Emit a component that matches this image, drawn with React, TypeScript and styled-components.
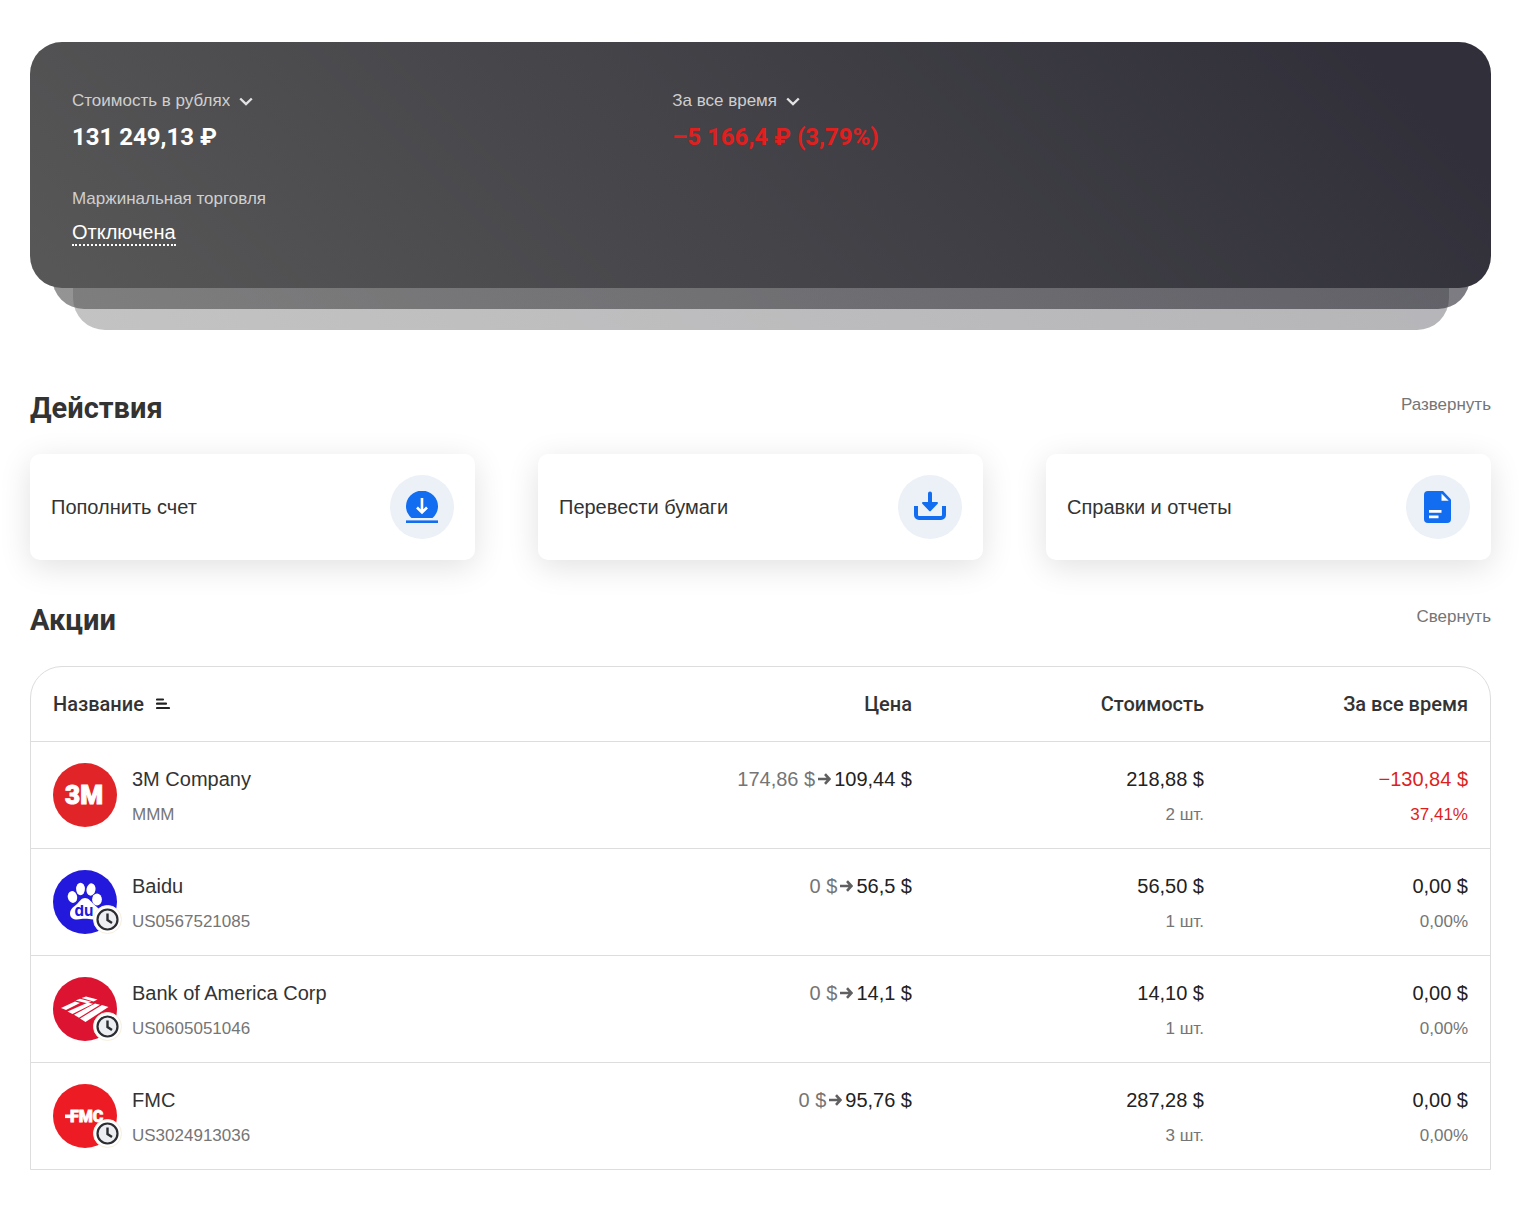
import React from "react";
import styled, { createGlobalStyle } from "styled-components";

const GlobalStyle = createGlobalStyle`
  *, *::before, *::after { box-sizing: border-box; }
  body {
    margin: 0;
    background: #fff;
    color: #333;
    font-family: "Liberation Sans", Arial, sans-serif;
    font-size: 20px;
    line-height: 32px;
  }
  button, select {
    margin: 0;
    padding: 0;
    border: 0;
    background: none;
    color: inherit;
    font: inherit;
    cursor: pointer;
  }
`;

const Page = styled.main`
  padding: 42px 29px 43px 30px;
`;

const Deck = styled.section`
  position: relative;
  z-index: 0;
  margin-bottom: 104px;
`;

const deckGradient = "linear-gradient(45deg, #585858 0%, #31303a 92%)";

const Layer = styled.div<{ $step: number; $opacity: number }>`
  position: absolute;
  z-index: -1;
  top: 42px;
  left: ${({ $step }) => $step * 21 + 1}px;
  right: ${({ $step }) => $step * 21}px;
  bottom: ${({ $step }) => $step * -21}px;
  border-radius: 32px;
  background: ${deckGradient};
  opacity: ${({ $opacity }) => $opacity};
`;

const Balance = styled.div`
  display: grid;
  grid-template-columns: 17fr 22fr;
  row-gap: 34px;
  padding: 47px 42px 42px;
  border-radius: 32px;
  background: ${deckGradient};
`;

const Figure = styled.div`
  display: flex;
  flex-direction: column;
  align-items: flex-start;
  gap: 8px;
`;

const Caption = styled.span`
  display: inline-flex;
  align-items: center;
  gap: 9px;
  font-size: 17px;
  line-height: 24px;
  color: #cfcfcf;
`;

const Select = styled.select`
  appearance: none;
  field-sizing: content;
  height: 24px;
  outline: none;
`;

const Amount = styled.strong<{ $loss?: boolean }>`
  font-family: Roboto, sans-serif;
  font-size: 24px;
  font-weight: 700;
  color: ${({ $loss }) => ($loss ? "#e01f1f" : "#fff")};
`;

const Status = styled.button`
  height: 27px;
  border-bottom: 2px dotted #fff;
  line-height: 26px;
  color: #fff;
`;

const SectionHead = styled.header`
  display: flex;
  align-items: flex-start;
  justify-content: space-between;
`;

const Title = styled.h2`
  margin: 0;
  font-family: Roboto, sans-serif;
  font-size: 29px;
  line-height: 32px;
  font-weight: 700;
`;

const Toggle = styled.button`
  font-size: 17px;
  line-height: 26px;
  color: #757575;
`;

const Actions = styled.div`
  display: grid;
  grid-template-columns: repeat(3, 1fr);
  gap: 63px;
  margin: 30px 0 44px;
`;

const Action = styled.button`
  display: flex;
  align-items: center;
  justify-content: space-between;
  padding: 21px;
  border-radius: 10px;
  background: #fff;
  box-shadow: 0 7px 32px rgba(0, 0, 0, 0.12);
  text-align: left;
`;

const Round = styled.span`
  display: grid;
  place-items: center;
  width: 64px;
  height: 64px;
  border-radius: 50%;
  background: #ecf1f7;
`;

const Table = styled.table`
  width: 100%;
  margin-top: 30px;
  table-layout: fixed;
  border: 1px solid #ddd;
  border-radius: 32px 32px 0 0;
  border-collapse: separate;
  border-spacing: 0;
`;

const HeadCell = styled.th<{ $width?: number }>`
  width: ${({ $width }) => ($width ? `${$width}px` : "auto")};
  padding: 21px 22px;
  font-family: Roboto, sans-serif;
  font-weight: 500;
  text-align: ${({ $width }) => ($width ? "right" : "left")};
`;

const SortButton = styled.button`
  display: inline-flex;
  align-items: center;
  gap: 12px;
`;

const Cell = styled.td<{ $start?: boolean }>`
  padding: 21px 22px;
  border-top: 1px solid #ddd;
  vertical-align: top;
  text-align: ${({ $start }) => ($start ? "left" : "right")};
`;

const Asset = styled.div`
  display: flex;
  gap: 15px;
`;

const Logo = styled.div`
  position: relative;
  width: 64px;
  height: 64px;
`;

const Badge = styled.span`
  position: absolute;
  right: -5px;
  bottom: 0;
  display: grid;
  place-items: center;
  width: 29px;
  height: 29px;
  border-radius: 50%;
  border: 1px solid #f6efdd;
  background: #fff;
`;

type Tone = "plain" | "strong" | "muted" | "loss";
const tones: Record<Tone, string> = {
  plain: "#333",
  strong: "#222",
  muted: "#757575",
  loss: "#dd1f1f",
};

const Main = styled.div<{ $tone?: Tone }>`
  color: ${({ $tone = "plain" }) => tones[$tone]};
`;

const Sub = styled.div<{ $tone?: Tone }>`
  margin-top: 8px;
  font-size: 17px;
  line-height: 24px;
  color: ${({ $tone = "muted" }) => tones[$tone]};
`;

const Price = styled.div`
  display: flex;
  align-items: center;
  justify-content: flex-end;
  gap: 3px;
  color: #222;
`;

const OldPrice = styled.span`
  color: #757575;
`;

const Chevron = () => (
  <svg width="14" height="9" viewBox="0 0 14 9" fill="none" aria-hidden="true">
    <path d="M1.2 1.5 7 7l5.800-5.500" stroke="#e2e2e2" strokeWidth="2.4" />
  </svg>
);

const Arrow = () => (
  <svg width="13" height="12" viewBox="0 0 13 12" fill="none" aria-hidden="true">
    <path d="M0 6h11M7 1.200 11.400 6 7 10.800" stroke="#606060" strokeWidth="2.600" />
  </svg>
);

const SortIcon = () => (
  <svg width="14" height="12" viewBox="0 0 14 12" fill="none" aria-hidden="true">
    <path d="M1 1.500h6M1 5.700h9M1 10h12" stroke="#222" strokeWidth="2.200" strokeLinecap="round" />
  </svg>
);

const DepositIcon = () => (
  <svg width="32" height="32" viewBox="0 0 32 32" aria-hidden="true">
    <path d="M5.500 27A16 15.600 0 1 1 26.500 27Z" fill="#126df0" />
    <path d="M0 30.700h32" stroke="#126df0" strokeWidth="2.600" />
    <path d="M16 7v14M11 16.500l5 5 5-5" fill="none" stroke="#fff" strokeWidth="2.600" />
  </svg>
);

const TransferIcon = () => (
  <svg width="32" height="32" viewBox="0 0 32 32" aria-hidden="true">
    <path d="M2 15v9a3 3 0 0 0 3 3h22a3 3 0 0 0 3-3v-9" fill="none" stroke="#126df0" strokeWidth="4" />
    <path d="M14 2.500a2 2 0 0 1 4 0V11h5a1 1 0 0 1 .7 1.700l-6.700 7a1.400 1.400 0 0 1-2 0l-6.700-7A1 1 0 0 1 9 11h5z" fill="#126df0" />
  </svg>
);

const ReportIcon = () => (
  <svg width="28" height="32" viewBox="0 0 28 32" aria-hidden="true">
    <path d="M4 0h15l8 8.500V28a4 4 0 0 1-4 4H4a4 4 0 0 1-4-4V4a4 4 0 0 1 4-4Z" fill="#126df0" />
    <path d="M17.500 2.500v7.200h7.200Z" fill="#fff" />
    <path d="M5 20.300h12.500M5 25.800h9.500" stroke="#fff" strokeWidth="2.800" />
  </svg>
);

const Clock = () => (
  <svg width="23" height="23" viewBox="0 0 23 23" aria-hidden="true">
    <circle cx="11.500" cy="11.500" r="10" fill="#eceef1" stroke="#2b2d31" strokeWidth="2.200" />
    <path d="M11.500 5.500V12l4.500 3" fill="none" stroke="#2b2d31" strokeWidth="2.400" />
  </svg>
);

const MmmLogo = () => (
  <svg width="64" height="64" viewBox="0 0 64 64" aria-hidden="true">
    <circle cx="32" cy="32" r="32" fill="#e12427" />
    <text x="31" y="41" textAnchor="middle" fontFamily="Roboto, sans-serif" fontWeight="900" fontSize="26" fill="#fff" stroke="#fff" strokeWidth="1">3M</text>
  </svg>
);

const BaiduLogo = () => (
  <svg width="64" height="64" viewBox="0 0 64 64" aria-hidden="true">
    <circle cx="32" cy="32" r="32" fill="#2319dc" />
    <g fill="#fff">
      <ellipse cx="19.500" cy="27" rx="4.700" ry="6" transform="rotate(-12 19.500 27)" />
      <ellipse cx="27.500" cy="19" rx="4.400" ry="6.200" />
      <ellipse cx="38" cy="19.500" rx="4.500" ry="6.200" transform="rotate(10 38 19.500)" />
      <ellipse cx="44" cy="29.500" rx="4.900" ry="5.900" />
      <path d="M32 28c-3.500 0-5 3-7.500 5.500S17 38.500 17 43.500c0 4 3 6 7 6 3 0 5-.7 8-.7s5 .7 8 .7c4 0 7-2 7-6 0-5-4.500-7.500-7-10S35.500 28 32 28Z" />
    </g>
    <text x="31" y="46" textAnchor="middle" fontFamily="Inter, sans-serif" fontWeight="700" fontSize="15" fill="#2319dc">du</text>
  </svg>
);

const BankLogo = () => (
  <svg width="64" height="64" viewBox="0 0 64 64" aria-hidden="true">
    <circle cx="32" cy="32" r="32" fill="#dc1431" />
    <g fill="#fff">
      <path d="M8 31 22 24.500l5 1.400L13 33Z" />
      <path d="M14.500 34.500 35 25.500l5 1.200L19.500 37Z" />
      <path d="M21 37.800 42 26.500l5 1.200L26 40.800Z" />
      <path d="M27 41.500 49 28l6.500 2L32.500 45Z" />
      <path d="M22.500 23.500 27 21.700l11.500 3-4.500 1.600ZM28.500 21l4.500-1.500 11.500 3-4 2Z" />
    </g>
  </svg>
);

const FmcLogo = () => (
  <svg width="64" height="64" viewBox="0 0 64 64" aria-hidden="true">
    <circle cx="32" cy="32" r="32" fill="#ed1c24" />
    <text x="17" y="38" fontFamily="Roboto, sans-serif" fontWeight="900" fontSize="16" fill="#fff" stroke="#fff" strokeWidth="0.800">FMC</text>
    <path d="M12 30.500h8v3.600h-8Z" fill="#fff" />
  </svg>
);

const actions = [
  { label: "Пополнить счет", Icon: DepositIcon },
  { label: "Перевести бумаги", Icon: TransferIcon },
  { label: "Справки и отчеты", Icon: ReportIcon },
];

const shares = [
  { name: "3M Company", code: "MMM", Mark: MmmLogo, closed: false, from: "174,86 $", to: "109,44 $", total: "218,88 $", count: "2 шт.", gain: "−130,84 $", percent: "37,41%" },
  { name: "Baidu", code: "US0567521085", Mark: BaiduLogo, closed: true, from: "0 $", to: "56,5 $", total: "56,50 $", count: "1 шт.", gain: "0,00 $", percent: "0,00%" },
  { name: "Bank of America Corp", code: "US0605051046", Mark: BankLogo, closed: true, from: "0 $", to: "14,1 $", total: "14,10 $", count: "1 шт.", gain: "0,00 $", percent: "0,00%" },
  { name: "FMC", code: "US3024913036", Mark: FmcLogo, closed: true, from: "0 $", to: "95,76 $", total: "287,28 $", count: "3 шт.", gain: "0,00 $", percent: "0,00%" },
];

export default function App() {
  return (
    <>
      <GlobalStyle />
      <Page>
        <Deck>
          <Layer $step={1} $opacity={0.64} />
          <Layer $step={2} $opacity={0.36} />
          <Balance>
            <Figure>
              <Caption as="label">
                <Select aria-labelledby="total-value">
                  <option>Стоимость в рублях</option>
                </Select>
                <Chevron />
              </Caption>
              <Amount id="total-value">131 249,13 ₽</Amount>
            </Figure>
            <Figure>
              <Caption as="label">
                <Select aria-labelledby="total-gain">
                  <option>За все время</option>
                </Select>
                <Chevron />
              </Caption>
              <Amount id="total-gain" $loss>–5 166,4 ₽ (3,79%)</Amount>
            </Figure>
            <Figure>
              <Caption>Маржинальная торговля</Caption>
              <Status type="button">Отключена</Status>
            </Figure>
          </Balance>
        </Deck>

        <section>
          <SectionHead>
            <Title>Действия</Title>
            <Toggle type="button">Развернуть</Toggle>
          </SectionHead>
          <Actions>
            {actions.map(({ label, Icon }) => (
              <Action key={label} type="button">
                {label}
                <Round>
                  <Icon />
                </Round>
              </Action>
            ))}
          </Actions>
        </section>

        <section>
          <SectionHead>
            <Title>Акции</Title>
            <Toggle type="button">Свернуть</Toggle>
          </SectionHead>
          <Table>
            <thead>
              <tr>
                <HeadCell scope="col">
                  <SortButton type="button">
                    Название
                    <SortIcon />
                  </SortButton>
                </HeadCell>
                <HeadCell scope="col" $width={292}>Цена</HeadCell>
                <HeadCell scope="col" $width={292}>Стоимость</HeadCell>
                <HeadCell scope="col" $width={264}>За все время</HeadCell>
              </tr>
            </thead>
            <tbody>
              {shares.map(({ Mark, ...share }) => {
                const loss = share.gain.startsWith("−");
                return (
                  <tr key={share.code}>
                    <Cell $start>
                      <Asset>
                        <Logo>
                          <Mark />
                          {share.closed && (
                            <Badge>
                              <Clock />
                            </Badge>
                          )}
                        </Logo>
                        <div>
                          <Main>{share.name}</Main>
                          <Sub>{share.code}</Sub>
                        </div>
                      </Asset>
                    </Cell>
                    <Cell>
                      <Price>
                        <OldPrice>{share.from}</OldPrice>
                        <Arrow />
                        <span>{share.to}</span>
                      </Price>
                    </Cell>
                    <Cell>
                      <Main $tone="strong">{share.total}</Main>
                      <Sub>{share.count}</Sub>
                    </Cell>
                    <Cell>
                      <Main $tone={loss ? "loss" : "strong"}>{share.gain}</Main>
                      <Sub $tone={loss ? "loss" : "muted"}>{share.percent}</Sub>
                    </Cell>
                  </tr>
                );
              })}
            </tbody>
          </Table>
        </section>
      </Page>
    </>
  );
}
